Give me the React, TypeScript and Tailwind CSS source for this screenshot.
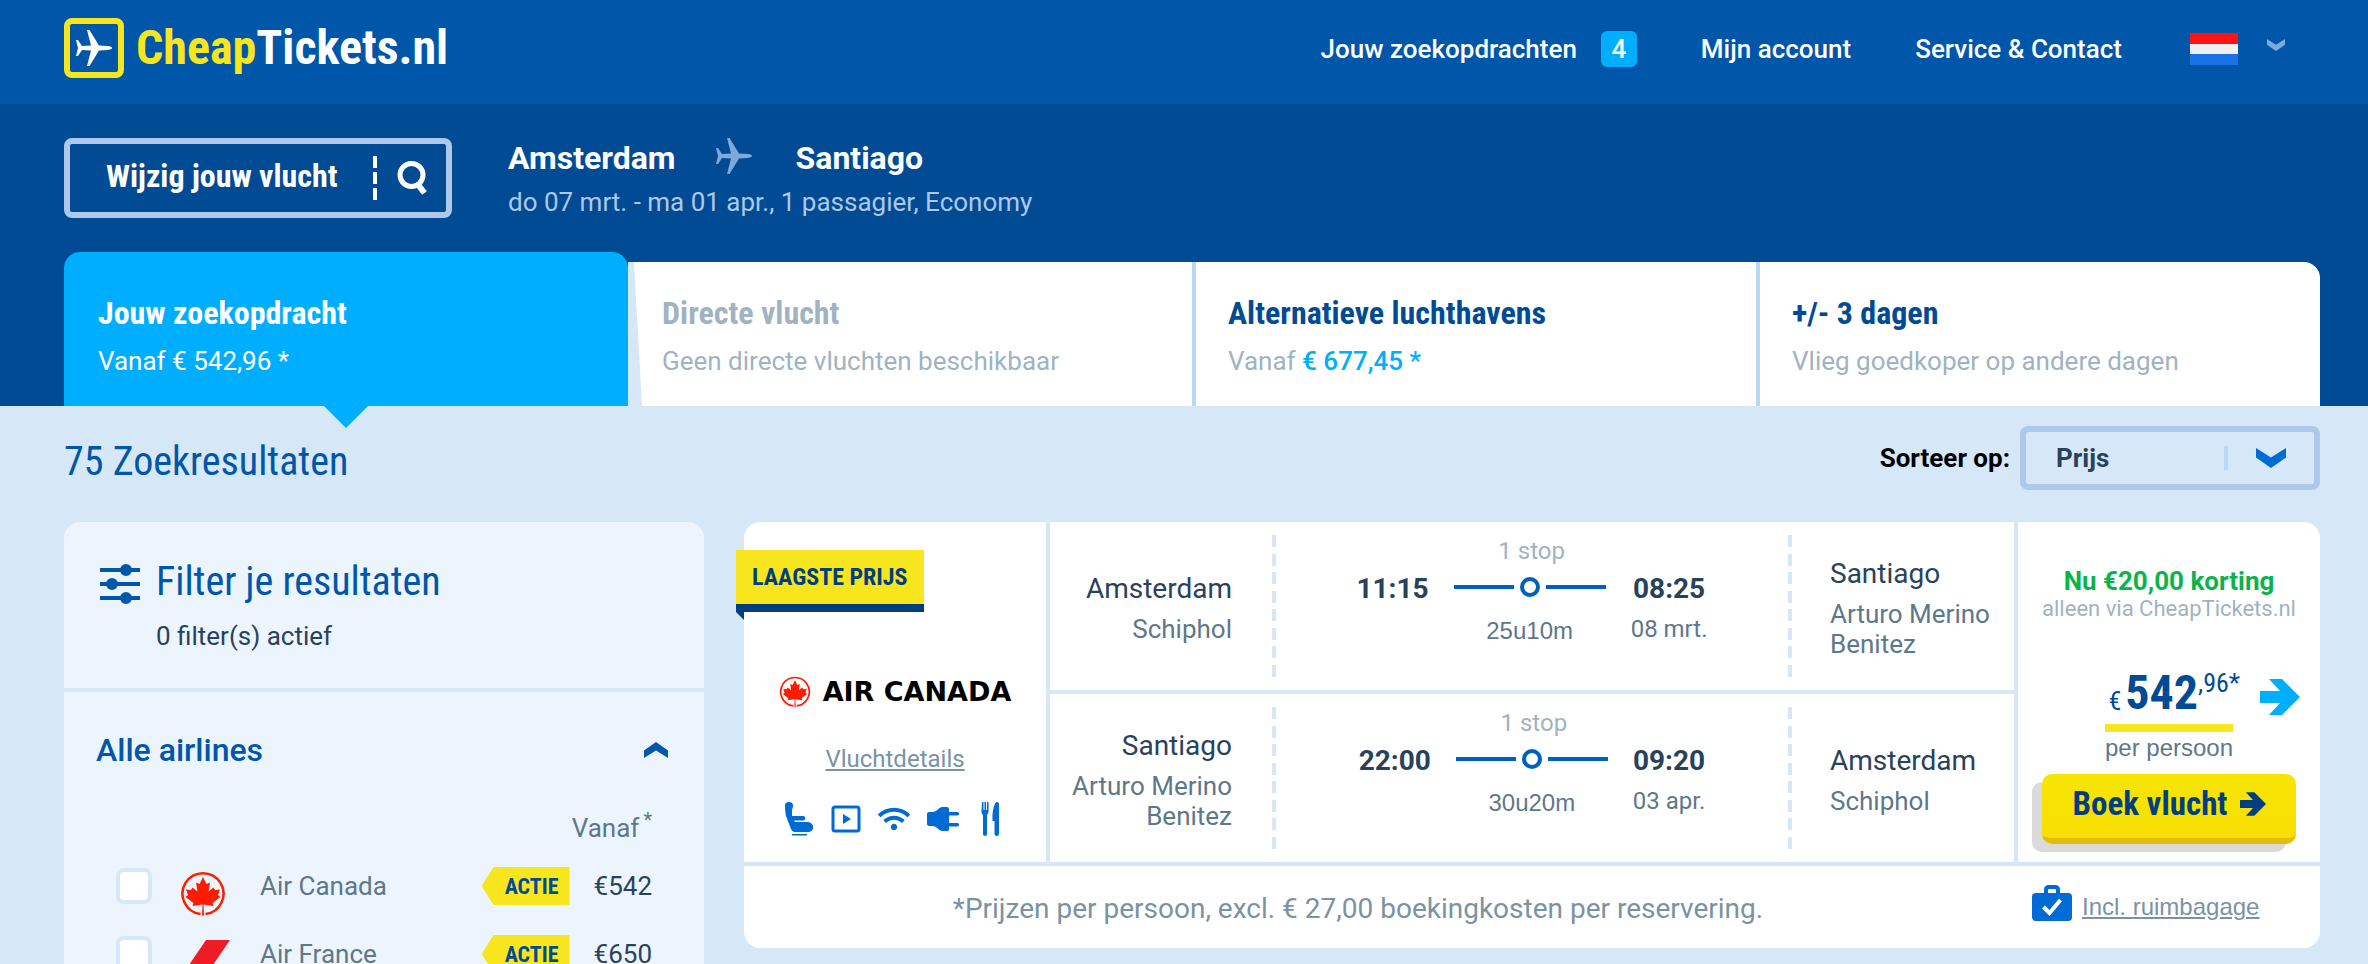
import { FaWifi } from "react-icons/fa";
import type { ReactNode } from "react";

type Tab = {
  title: string;
  text: ReactNode;
  disabled?: boolean;
};

type Airline = {
  id: string;
  name: string;
  price: string;
  logo: ReactNode;
};

type Place = {
  city: string;
  airport: string;
};

type Leg = {
  id: number;
  from: Place;
  to: Place;
  departure: string;
  arrival: string;
  date: string;
  duration: string;
};

const tabs: Tab[] = [
  {
    title: "Directe vlucht",
    text: "Geen directe vluchten beschikbaar",
    disabled: true,
  },
  {
    title: "Alternatieve luchthavens",
    text: (
      <>
        Vanaf <span className="font-medium text-[#00aeff]">€ 677,45 *</span>
      </>
    ),
  },
  { title: "+/- 3 dagen", text: "Vlieg goedkoper op andere dagen" },
];

const legs: Leg[] = [
  {
    id: 1,
    from: { city: "Amsterdam", airport: "Schiphol" },
    to: { city: "Santiago", airport: "Arturo Merino Benitez" },
    departure: "11:15",
    arrival: "08:25",
    date: "08 mrt.",
    duration: "25u10m",
  },
  {
    id: 2,
    from: { city: "Santiago", airport: "Arturo Merino Benitez" },
    to: { city: "Amsterdam", airport: "Schiphol" },
    departure: "22:00",
    arrival: "09:20",
    date: "03 apr.",
    duration: "30u20m",
  },
];

const Plane = ({ className }: { className: string }) => (
  <svg viewBox="0 0 36 36" className={className} fill="currentColor">
    <path d="M11 0h2.500l9.500 15.500 9 .6c2.500.3 4 1 4 1.900s-1.500 1.600-4 1.900l-9 .6L13.500 36H11l4-15.500-9-.6L2 26H0l2-8-2-8h2l4 6.100 9-.6z" />
  </svg>
);

const Chevron = ({ className }: { className: string }) => (
  <svg viewBox="0 0 30 20" className={className} fill="currentColor">
    <path d="M0 0l15 9.500L30 0v9.500L15 20 0 9.500z" />
  </svg>
);

const ArrowRight = ({ className }: { className: string }) => (
  <svg viewBox="0 0 40 36" className={className} fill="currentColor">
    <path d="M9 0h13l18 18-18 18H9l11-12H0V12h20z" />
  </svg>
);

const AirCanadaMark = ({ className }: { className: string }) => (
  <svg viewBox="0 0 46 46" className={className}>
    <path
      d="M20.500 43A20.500 20.500 0 1 1 25.500 43"
      fill="none"
      stroke="#ff1a00"
      strokeWidth="2.500"
    />
    <path
      d="M23 6l3.500 7 3.500-1.500-1.500 9 5-4 1.500 2.500 5-.5-2 5.500 2.500 2-8 6 1 3-10-1.500.5 11h-2l.5-11L12.500 35l1-3-8-6L8 24l-2-5.500 5 .5 1.500-2.500 5 4-1.500-9 3.500 1.500z"
      fill="#ff1a00"
    />
  </svg>
);

const AirFranceMark = () => (
  <svg viewBox="0 0 54 44" className="h-11 w-[54px]">
    <path d="M30 0h24L24 44H0z" fill="#ee1c25" />
  </svg>
);

const airlines: Airline[] = [
  {
    id: "ac",
    name: "Air Canada",
    price: "€542",
    logo: <AirCanadaMark className="size-[46px]" />,
  },
  { id: "af", name: "Air France", price: "€650", logo: <AirFranceMark /> },
];

const Header = () => (
  <header className="flex h-26 items-center justify-between bg-[#0056a9] pr-12 pb-2 pl-16">
    <a href="#" className="flex items-center gap-3">
      <span className="flex size-15 items-center justify-center rounded-lg border-6 border-[#f7e61e]">
        <Plane className="size-9 text-white" />
      </span>
      <span className="font-['Roboto_Condensed',sans-serif] text-[48px] leading-[60px] font-bold text-white">
        <span className="text-[#f7e61e]">Cheap</span>Tickets.nl
      </span>
    </a>
    <nav className="flex items-center pt-[2px] text-[26px] font-medium text-white">
      <a href="#" className="flex items-center gap-6">
        Jouw zoekopdrachten
        <span className="flex size-9 items-center justify-center rounded-md bg-[#00aeff]">
          4
        </span>
      </a>
      <a href="#" className="ml-16">
        Mijn account
      </a>
      <a href="#" className="ml-16">
        Service & Contact
      </a>
      <button
        type="button"
        aria-label="Taal"
        className="mr-[34px] ml-17 flex items-center gap-7"
      >
        <svg viewBox="0 0 48 32" className="h-8 w-12">
          <path d="M0 0h48v11H0z" fill="#ff1414" />
          <path d="M0 11h48v10H0z" fill="#f0f0f0" />
          <path d="M0 21h48v11H0z" fill="#1973e8" />
        </svg>
        <Chevron className="mb-2 h-3 w-5 text-[#7fa8dc]" />
      </button>
    </nav>
  </header>
);

const SearchSummary = () => (
  <div className="flex items-start gap-14 pt-[34px] pr-12 pl-16">
    <button
      type="button"
      className="flex h-20 w-[388px] items-center rounded-lg border-6 border-[#adc8ea] pl-9 text-white"
    >
      <span className="pb-1 font-['Roboto_Condensed',sans-serif] text-[32px] font-bold whitespace-nowrap">
        Wijzig jouw vlucht
      </span>
      <span className="ml-9 flex h-11 w-1 flex-col justify-between">
        <span className="h-3 bg-white" />
        <span className="h-3 bg-white" />
        <span className="h-3 bg-white" />
      </span>
      <svg viewBox="0 0 32 34" className="ml-5 h-[34px] w-8" fill="none">
        <circle cx="14.500" cy="14" r="11.500" stroke="white" strokeWidth="5" />
        <path d="M20.500 23l7 9" stroke="white" strokeWidth="6" />
      </svg>
    </button>
    <div className="flex flex-col gap-1">
      <div className="flex items-center text-[32px] leading-10 font-bold text-white">
        Amsterdam
        <Plane className="mr-11 mb-1 ml-10 size-9 text-[#7fa8dc]" />
        Santiago
      </div>
      <p className="text-[26px] leading-10 text-[#adc8ea]">
        do 07 mrt. - ma 01 apr., 1 passagier, Economy
      </p>
    </div>
  </div>
);

const Tabs = () => (
  <nav className="mt-[30px] grid grid-cols-4 items-end pr-12 pl-16">
    <button
      type="button"
      className="relative h-[154px] rounded-t-2xl bg-[#00aeff] pt-3 pl-[34px] text-left text-white"
    >
      <span className="block font-['Roboto_Condensed',sans-serif] text-[32px] leading-12 font-bold">
        Jouw zoekopdracht
      </span>
      <span className="block pt-1 text-[26px] leading-10">
        Vanaf € 542,96 *
      </span>
      <svg
        viewBox="0 0 44 22"
        className="absolute top-full left-1/2 h-[22px] w-11 -translate-x-1/2"
      >
        <path d="M0 0h44L22 22z" fill="#00aeff" />
      </svg>
    </button>
    {tabs.map((tab, index) => (
      <button
        key={tab.title}
        type="button"
        disabled={tab.disabled}
        className={`relative h-36 bg-white pt-[2px] text-left ${
          index > 0 ? "border-l-4 border-[#bcd7f5] pl-8" : "pl-[34px]"
        } ${index === tabs.length - 1 ? "rounded-tr-2xl" : ""}`}
      >
        {index === 0 && (
          <svg
            viewBox="0 0 14 144"
            className="absolute top-0 left-0 h-full w-[14px]"
          >
            <path d="M0 0h6l8 144H0z" fill="#d6e7f8" />
          </svg>
        )}
        <span
          className={`block font-['Roboto_Condensed',sans-serif] text-[32px] leading-12 font-bold ${
            tab.disabled ? "text-[#9fb3c2]" : "text-[#004b93]"
          }`}
        >
          {tab.title}
        </span>
        <span className="block pt-1 text-[26px] leading-10 text-[#9fb3c2]">
          {tab.text}
        </span>
      </button>
    ))}
  </nav>
);

const ResultsBar = () => (
  <div className="flex h-22 items-start justify-between pt-5 pr-12 pl-16">
    <h1 className="pt-1 font-['Roboto_Condensed',sans-serif] text-[40px] leading-16 text-[#0056a9]">
      75 Zoekresultaten
    </h1>
    <div className="flex items-center gap-[10px] text-[26px]">
      <label htmlFor="sort" className="font-bold text-black">
        Sorteer op:
      </label>
      <div className="relative">
        <select
          id="sort"
          className="block h-16 w-75 appearance-none rounded-lg border-6 border-[#adc8ea] bg-transparent pl-[30px] font-bold text-[#29425c]"
        >
          <option>Prijs</option>
        </select>
        <div className="pointer-events-none absolute inset-y-0 right-[34px] flex items-center gap-7">
          <span className="h-6 w-1 bg-[#bcd7f5]" />
          <Chevron className="h-5 w-[30px] text-[#006ad5]" />
        </div>
      </div>
    </div>
  </div>
);

const Filters = () => (
  <aside className="w-[640px] shrink-0 rounded-t-2xl bg-[#ecf4fe]">
    <div className="flex gap-4 border-b-4 border-[#d6e7f8] pt-[34px] pb-8 pl-9">
      <svg
        viewBox="0 0 40 40"
        className="mt-2 size-10"
        stroke="#0056a9"
        strokeWidth="4"
        fill="#0056a9"
      >
        <path d="M0 6h40M0 20h40M0 34h40" />
        <circle cx="26" cy="6" r="4" />
        <circle cx="12" cy="20" r="4" />
        <circle cx="26" cy="34" r="4" />
      </svg>
      <div>
        <h2 className="font-['Roboto_Condensed',sans-serif] text-[40px] leading-[52px] text-[#0056a9]">
          Filter je resultaten
        </h2>
        <p className="pt-2 text-[26px] leading-10 text-[#29425c]">
          0 filter(s) actief
        </p>
      </div>
    </div>
    <button
      type="button"
      className="flex w-full items-center justify-between pt-[34px] pr-9 pl-8 text-[32px] leading-12 font-medium text-[#0056a9]"
    >
      Alle airlines
      <Chevron className="h-4 w-6 rotate-180" />
    </button>
    <p className="pt-[34px] pr-13 text-right text-[26px] leading-10 text-[#5d788a]">
      Vanaf<sup className="ml-1 text-[20px]">*</sup>
    </p>
    <ul className="pt-1">
      {airlines.map((airline) => (
        <li
          key={airline.id}
          className="flex h-17 items-center pr-13 pl-13 text-[26px]"
        >
          <label className="flex flex-1 items-center text-[#5d788a]">
            <input
              type="checkbox"
              className="size-9 appearance-none rounded-lg border-4 border-[#d6e7f8] bg-white"
            />
            <span className="mt-4 ml-6 flex w-[54px] justify-center">
              {airline.logo}
            </span>
            <span className="ml-[30px]">{airline.name}</span>
          </label>
          <span className="flex h-[38px] w-22 items-center justify-center bg-[#f7e61e] pl-3 font-['Roboto_Condensed',sans-serif] text-[22px] font-bold text-[#004b93] [clip-path:polygon(12px_0,100%_0,100%_100%,12px_100%,0_50%)]">
            ACTIE
          </span>
          <span className="ml-6 text-[#29425c]">{airline.price}</span>
        </li>
      ))}
    </ul>
  </aside>
);

const Dashes = () => (
  <div className="flex h-[142px] w-1 shrink-0 flex-col justify-between">
    {Array.from({ length: 8 }, (_, i) => (
      <span key={i} className="h-3 bg-[#d6e7f8]" />
    ))}
  </div>
);

const PlaceInfo = ({ place }: { place: Place }) => (
  <div className="flex flex-col gap-2 pt-1">
    <p className="text-[28px] leading-[34px] text-[#29425c]">{place.city}</p>
    <p className="text-[26px] leading-[30px] text-[#5d788a]">
      {place.airport}
    </p>
  </div>
);

const LegRow = ({ leg }: { leg: Leg }) => (
  <div className="flex h-[168px] items-center bg-white">
    <div className="w-[222px] shrink-0 pr-10 pl-5 text-right">
      <PlaceInfo place={leg.from} />
    </div>
    <Dashes />
    <div className="flex h-full flex-1 justify-center gap-6">
      <p className="pt-[50px] text-[28px] leading-[34px] font-bold text-[#29425c]">
        {leg.departure}
      </p>
      <div className="flex w-[154px] flex-col items-center pt-[14px]">
        <p className="pl-1 text-[24px] leading-[30px] text-[#9fb3c2]">1 stop</p>
        <div className="flex h-[42px] items-center gap-[6px]">
          <span className="h-1 w-15 bg-[#0060bf]" />
          <span className="size-5 rounded-full border-4 border-[#0060bf]" />
          <span className="h-1 w-15 bg-[#0060bf]" />
        </div>
        <p className="pt-2 font-['Liberation_Sans',sans-serif] text-[24px] leading-[30px] text-[#5d788a]">
          {leg.duration}
        </p>
      </div>
      <div className="text-center">
        <p className="pt-[50px] text-[28px] leading-[34px] font-bold text-[#29425c]">
          {leg.arrival}
        </p>
        <p className="pt-2 text-[24px] leading-[30px] text-[#5d788a]">
          {leg.date}
        </p>
      </div>
    </div>
    <Dashes />
    <div className="w-[222px] shrink-0 pr-5 pl-[38px]">
      <PlaceInfo place={leg.to} />
    </div>
  </div>
);

const Carrier = () => (
  <div className="relative flex w-[302px] shrink-0 flex-col items-center rounded-tl-2xl bg-white pt-[154px]">
    <div className="absolute top-7 -left-2">
      <p className="border-b-8 border-[#003f7f] bg-[#f7e61e] px-4 font-['Roboto_Condensed',sans-serif] text-[24px] leading-[54px] font-bold whitespace-nowrap text-[#003f7f]">
        LAAGSTE PRIJS
      </p>
      <svg viewBox="0 0 8 8" className="size-2">
        <path d="M0 0h8v8z" fill="#003f7f" />
      </svg>
    </div>
    <div className="flex items-center gap-3">
      <AirCanadaMark className="size-8" />
      <span className="font-['DejaVu_Sans',sans-serif] text-[27px] leading-8 font-bold text-black">
        AIR CANADA
      </span>
    </div>
    <a
      href="#"
      className="mt-9 text-[24px] leading-[30px] text-[#7a93a3] underline"
    >
      Vluchtdetails
    </a>
    <div className="mt-7 flex items-center gap-[17px] text-[#006ad5]">
      <svg viewBox="0 0 30 34" className="h-[34px] w-[30px]" fill="currentColor">
        <path d="M5 0c3 0 4.500 2 4 4.500L8 8v6h11c3 0 3 4.500 0 4.500h-9l1 1.500h12c8 0 8 10 1 10H11c-2 0-3-1-4-3L2 14C1 9 1 6 1 3c0-2 2-3 4-3z" />
        <path d="M8 32h15v1.500H8z" />
      </svg>
      <svg viewBox="0 0 30 28" className="h-7 w-[30px]">
        <rect
          x="2"
          y="2"
          width="26"
          height="24"
          rx="2"
          fill="none"
          stroke="currentColor"
          strokeWidth="3"
        />
        <path d="M12 9l8 5-8 5z" fill="currentColor" />
      </svg>
      <FaWifi className="size-8" />
      <svg viewBox="0 0 32 26" className="h-[26px] w-8" fill="currentColor">
        <path d="M0 8.500c0-2 1-2.500 3-2.500h3c5-1 6-5 9-5h5c1.500 0 2 1 2 2.500V6h8.500c2 0 2 3.500 0 3.500H22v7.500h8.500c2 0 2 3.500 0 3.500H22v2.500c0 1.500-.5 2-2 2h-5c-3 0-4-4-9-5H3c-2 0-3-.5-3-2.500z" />
      </svg>
      <svg viewBox="0 0 30 34" className="h-[34px] w-[30px]" fill="currentColor">
        <path d="M6 0h1.500v8h1V0H10v8h1V0h1.500v9c0 2-.5 3-1.500 4v19c0 2.500-4 2.500-4 0V13c-1-1-1.500-2-1.500-4z" />
        <path d="M23 2v30c0 2.500-4.500 2.500-4.500 0V19H16.500V15c0-7 2-15 4.500-15 1.500 0 2 1 2 2z" />
      </svg>
    </div>
  </div>
);

const Booking = () => (
  <div className="flex w-[302px] shrink-0 flex-col items-center rounded-tr-2xl bg-white pt-[43px]">
    <p className="text-[26px] leading-8 font-bold text-[#0bb44b]">
      Nu €20,00 korting
    </p>
    <p className="text-[22px] leading-6 text-[#9fb3c2]">
      alleen via CheapTickets.nl
    </p>
    <div className="mt-11 flex h-[59px] w-full items-start justify-end gap-5 pr-5 font-['Roboto_Condensed',sans-serif] text-[#004b93]">
      <p className="flex items-start pt-[2px]">
        <span className="mr-1 pt-[14px] text-[26px] leading-10">€</span>
        <span className="text-[48px] leading-[52px] font-bold">542</span>
        <span className="text-[26px] leading-8">,96*</span>
      </p>
      <ArrowRight className="mt-[14px] h-9 w-10 text-[#00aeff]" />
    </div>
    <p className="border-t-8 border-[#f7e61e] font-['Liberation_Sans',sans-serif] text-[24px] leading-8 text-[#5d788a]">
      per persoon
    </p>
    <button
      type="button"
      className="mt-[10px] flex h-[70px] w-[254px] items-center justify-center gap-3 rounded-[10px] border-b-6 border-[#e6bc0c] bg-linear-to-b from-[#f5e504] to-[#f9de04] pb-1 font-['Roboto_Condensed',sans-serif] text-[33px] font-bold text-[#003f7f] shadow-[-10px_8px_0_#dadada]"
    >
      Boek vlucht
      <ArrowRight className="h-6 w-[26px]" />
    </button>
  </div>
);

const FlightCard = () => (
  <article className="flex flex-1 flex-col gap-1">
    <div className="flex gap-1">
      <Carrier />
      <div className="flex flex-1 flex-col gap-1">
        {legs.map((leg) => (
          <LegRow key={leg.id} leg={leg} />
        ))}
      </div>
      <Booking />
    </div>
    <footer className="flex h-[82px] items-center rounded-b-2xl bg-white">
      <p className="flex-1 pt-1 pr-15 text-center text-[28px] text-[#7a93a3]">
        *Prijzen per persoon, excl. € 27,00 boekingkosten per reservering.
      </p>
      <a
        href="#"
        className="flex w-[288px] items-center gap-[10px] font-['Liberation_Sans',sans-serif] text-[24px] text-[#7a93a3] underline"
      >
        <svg viewBox="0 0 40 36" className="mb-2 h-9 w-10">
          <path
            d="M14 9V5q0-3 3-3h6q3 0 3 3v4"
            fill="none"
            stroke="#006ad5"
            strokeWidth="4"
          />
          <rect y="8" width="40" height="28" rx="4" fill="#006ad5" />
          <path
            d="M11.500 22l6 6 11-13"
            fill="none"
            stroke="white"
            strokeWidth="4"
          />
        </svg>
        Incl. ruimbagage
      </a>
    </footer>
  </article>
);

const App = () => {
  return (
    <div className="min-h-screen bg-[#d6e7f8] font-['Roboto',sans-serif]">
      <Header />
      <section className="bg-[#004b93]">
        <SearchSummary />
        <Tabs />
      </section>
      <ResultsBar />
      <main className="flex items-start gap-10 pt-7 pr-12 pl-16">
        <Filters />
        <FlightCard />
      </main>
    </div>
  );
};

export default App;
